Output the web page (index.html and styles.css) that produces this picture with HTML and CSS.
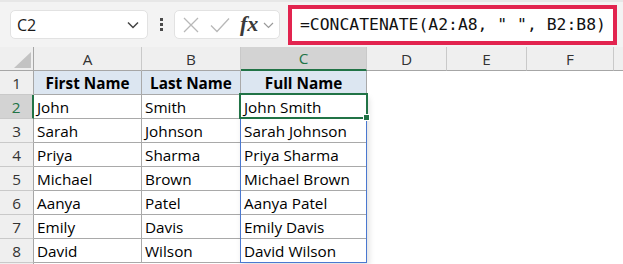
FILE: index.html
```html
<!DOCTYPE html>
<html>
<head>
<meta charset="utf-8">
<link rel="stylesheet" href="styles.css">
</head>
<body>
<div class="toolbar">
  <div class="namebox">
    <span>C2</span>
    <svg class="nb-chev" width="12" height="8" viewBox="0 0 12 8"><polyline points="1,1.5 6,6.5 11,1.5" fill="none" stroke="#444" stroke-width="1.5"/></svg>
  </div>
  <div class="dots"><i></i><i></i><i></i></div>
  <div class="fbtns">
    <svg class="ic-x" width="16" height="16" viewBox="0 0 16 16"><path d="M1 1L15 15M15 1L1 15" stroke="#b8b8b8" stroke-width="1.3" fill="none"/></svg>
    <svg class="ic-check" width="20" height="16" viewBox="0 0 20 16"><polyline points="1,8.5 7,14.5 19,1.5" fill="none" stroke="#b8b8b8" stroke-width="1.3"/></svg>
    <span class="fx">fx</span>
    <svg class="fx-chev" width="11" height="7" viewBox="0 0 11 7"><polyline points="1,1 5.5,5.5 10,1" fill="none" stroke="#9a9a9a" stroke-width="1.2"/></svg>
  </div>
  <div class="formula">=CONCATENATE(A2:A8, " ", B2:B8)</div>
</div>

<div class="sheet">
  <div class="ch corner"><svg width="17" height="16" viewBox="0 0 17 16"><polygon points="17,0 17,16 0,16" fill="#c3c3c3"/></svg></div>
  <div class="ch">A</div>
  <div class="ch">B</div>
  <div class="ch sel">C</div>
  <div class="ch">D</div>
  <div class="ch">E</div>
  <div class="ch">F</div>
  <div class="ch last"></div>

  <div class="rh">1</div>
  <div class="c hd">First Name</div>
  <div class="c hd">Last Name</div>
  <div class="c hd">Full Name</div>
  <div class="e"></div><div class="e"></div><div class="e"></div><div class="e"></div>

  <div class="rh sel">2</div>
  <div class="c">John</div>
  <div class="c b">Smith</div>
  <div class="c f active">John Smith<span class="spill"></span><span class="selection"></span></div>
  <div class="e"></div><div class="e"></div><div class="e"></div><div class="e"></div>

  <div class="rh">3</div>
  <div class="c">Sarah</div>
  <div class="c b">Johnson</div>
  <div class="c f">Sarah Johnson</div>
  <div class="e"></div><div class="e"></div><div class="e"></div><div class="e"></div>

  <div class="rh">4</div>
  <div class="c">Priya</div>
  <div class="c b">Sharma</div>
  <div class="c f">Priya Sharma</div>
  <div class="e"></div><div class="e"></div><div class="e"></div><div class="e"></div>

  <div class="rh">5</div>
  <div class="c">Michael</div>
  <div class="c b">Brown</div>
  <div class="c f">Michael Brown</div>
  <div class="e"></div><div class="e"></div><div class="e"></div><div class="e"></div>

  <div class="rh">6</div>
  <div class="c">Aanya</div>
  <div class="c b">Patel</div>
  <div class="c f">Aanya Patel</div>
  <div class="e"></div><div class="e"></div><div class="e"></div><div class="e"></div>

  <div class="rh">7</div>
  <div class="c">Emily</div>
  <div class="c b">Davis</div>
  <div class="c f">Emily Davis</div>
  <div class="e"></div><div class="e"></div><div class="e"></div><div class="e"></div>

  <div class="rh">8</div>
  <div class="c">David</div>
  <div class="c b">Wilson</div>
  <div class="c f">David Wilson</div>
  <div class="e"></div><div class="e"></div><div class="e"></div><div class="e"></div>

  <div class="rh"></div>
  <div class="e"></div><div class="e"></div><div class="e"></div><div class="e"></div><div class="e"></div><div class="e"></div><div class="e"></div>
</div>
</body>
</html>
```

FILE: styles.css
```css
html, body {
  margin: 0;
  padding: 0;
  background: #fff;
  overflow: hidden;
  font-family: "Open Sans", "Noto Sans", sans-serif;
}

.toolbar {
  height: 47px;
  box-sizing: border-box;
  display: flex;
  align-items: center;
  background: #f3f3f3;
  border-top: 2px solid #e7e7e7;
}

.namebox {
  margin-left: 10px;
  width: 138px;
  height: 29px;
  box-sizing: border-box;
  background: #fff;
  border: 1px solid #e2e2e2;
  border-radius: 5px;
  display: flex;
  align-items: center;
  justify-content: space-between;
  padding: 0 8px 0 6px;
  font-size: 16px;
  color: #1a1a1a;
}

.dots {
  margin-left: 12px;
  display: flex;
  flex-direction: column;
  gap: 2px;
}
.dots i {
  display: block;
  width: 3px;
  height: 3px;
  background: #4a4a4a;
}

.fbtns {
  margin-left: 11px;
  width: 106px;
  height: 29px;
  box-sizing: border-box;
  background: #fff;
  border: 1px solid #e2e2e2;
  border-radius: 5px;
  display: flex;
  align-items: center;
  padding-left: 8px;
}
.ic-check { margin-left: 11px; }
.fx {
  margin-left: 10px;
  font-family: "Liberation Serif", serif;
  font-style: italic;
  font-weight: 700;
  font-size: 22px;
  color: #3a3a3a;
  line-height: 1;
  margin-top: -2px;
}
.fx-chev { margin-left: 5px; margin-top: 2px; }

.formula {
  margin-left: 8px;
  width: 329px;
  height: 40px;
  box-sizing: border-box;
  border: 4px solid #e2244f;
  background: #fff;
  display: flex;
  align-items: center;
  padding-left: 8px;
  font-family: "DejaVu Sans Mono", monospace;
  font-size: 16.4px;
  color: #111;
  white-space: pre;
}

.sheet {
  display: grid;
  grid-template-columns: 34px 108px 99px 126px 80px 80px 87px 1fr;
  grid-template-rows: repeat(10, 24px);
  font-size: 15.3px;
}

.ch {
  background: #efefef;
  border-right: 1px solid #c9c9c9;
  border-bottom: 1px solid #a6a6a6;
  box-sizing: border-box;
  display: flex;
  align-items: center;
  justify-content: center;
  color: #333;
}
.ch.last { border-right: none; }
.ch.sel {
  background: #d3d3d3;
  color: #217346;
  border-bottom: 2px solid #217346;
}
.corner {
  justify-content: flex-end;
  align-items: flex-end;
  padding: 0 2px 2px 0;
  border-right-color: #a6a6a6;
}
.corner svg { display: block; }

.rh {
  background: #efefef;
  border-right: 1px solid #a6a6a6;
  border-bottom: 1px solid #c9c9c9;
  box-sizing: border-box;
  display: flex;
  align-items: center;
  justify-content: center;
  color: #333;
}
.rh.sel {
  background: #d3d3d3;
  color: #217346;
  border-right: 2px solid #217346;
}

.c {
  border-right: 1px solid #a9a9a9;
  border-bottom: 1px solid #a9a9a9;
  box-sizing: border-box;
  display: flex;
  align-items: center;
  padding-left: 3px;
  color: #000;
  white-space: nowrap;
}
.c.hd {
  background: #dce6f1;
  font-weight: 700;
  justify-content: center;
  padding-left: 0;
}
.c.b { border-right-color: #4a78d0; }
.c.f { border-right-color: #4a78d0; }
.c.active { position: relative; }

.e { background: #fff; }

.spill {
  position: absolute;
  left: -1px;
  top: 0;
  width: 127px;
  height: 168px;
  box-sizing: border-box;
  border-left: 1px solid #4a78d0;
  border-right: 1px solid #4a78d0;
  border-bottom: 1px solid #4a78d0;
  box-shadow: 2px 3px 6px rgba(0, 0, 0, 0.13);
  pointer-events: none;
  z-index: 1;
}

.selection {
  position: absolute;
  left: -2px;
  top: -2px;
  width: 129px;
  height: 26px;
  box-sizing: border-box;
  border: 2px solid #217346;
  pointer-events: none;
  z-index: 2;
}
.selection::after {
  content: "";
  position: absolute;
  right: -4px;
  bottom: -4px;
  width: 5px;
  height: 5px;
  background: #217346;
  border: 1px solid #fff;
}
```
